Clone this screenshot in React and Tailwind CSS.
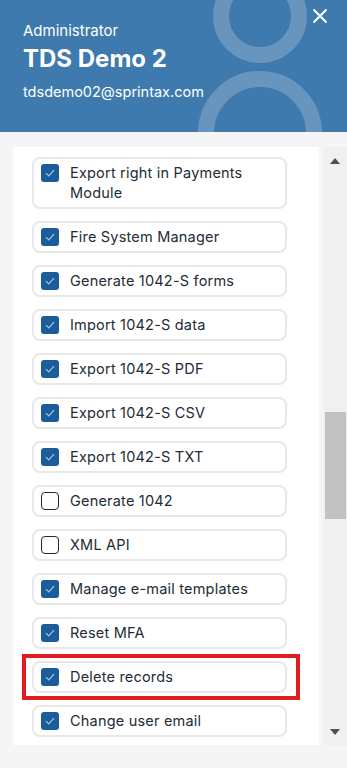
import React from "react";

const perms = [
  { label: "Export right in Payments Module", on: true },
  { label: "Fire System Manager", on: true },
  { label: "Generate 1042-S forms", on: true },
  { label: "Import 1042-S data", on: true },
  { label: "Export 1042-S PDF", on: true },
  { label: "Export 1042-S CSV", on: true },
  { label: "Export 1042-S TXT", on: true },
  { label: "Generate 1042", on: false },
  { label: "XML API", on: false },
  { label: "Manage e-mail templates", on: true },
  { label: "Reset MFA", on: true },
  { label: "Delete records", on: true, marked: true },
  { label: "Change user email", on: true },
];

function Box({ on }) {
  if (!on) {
    return (
      <span className="mt-[1px] h-[18px] w-[18px] shrink-0 rounded-[4px] border-[1.5px] border-[#1e2a36] bg-white" />
    );
  }
  return (
    <span className="mt-[1px] flex h-[18px] w-[18px] shrink-0 items-center justify-center rounded-[3px] bg-[#1b5c9b]">
      <svg width="12" height="10" viewBox="0 0 12 10" fill="none">
        <path d="M2 5.2 L4.8 8 L10 2.2" stroke="#a9c6e4" strokeWidth="1.2" />
      </svg>
    </span>
  );
}

function Row({ label, on }) {
  return (
    <div className="flex w-[255px] shrink-0 items-start gap-[11px] rounded-[8px] border-2 border-[#e8e8e8] bg-white py-[4px] pl-[7px] pr-3">
      <Box on={on} />
      <span className="text-[14.5px] leading-[20px] tracking-[0.2px] text-[#222c36]">{label}</span>
    </div>
  );
}

export default function App() {
  return (
    <div className="h-[768px] w-[347px] overflow-hidden bg-[#f5f5f5] font-['Inter',sans-serif]">
      <div className="relative h-[132px] overflow-hidden bg-[#3e7aae] pl-[23px] pt-[21px] text-white">
        <div className="absolute left-[213px] top-[-31px] h-[94px] w-[94px] rounded-full border-[16px] border-[#6895bd]" />
        <div className="absolute left-[198px] top-[71px] h-[124px] w-[124px] rounded-full border-[16px] border-[#6895bd]" />
        <svg className="absolute left-[312px] top-[8px]" width="16" height="16" viewBox="0 0 16 16">
          <path d="M1.5 1.5 L14.5 14.5 M14.5 1.5 L1.5 14.5" stroke="white" strokeWidth="2" />
        </svg>
        <div className="relative text-[15px] leading-[20px]">Administrator</div>
        <div className="relative mt-[3px] text-[24px] font-bold leading-[30px]">TDS Demo 2</div>
        <div className="relative mt-[8px] text-[14.5px] leading-[20px]">tdsdemo02@sprintax.com</div>
      </div>
      <div className="mt-[15px] flex h-[598px]">
        <div className="ml-[13px] flex w-[306px] flex-col gap-[12px] overflow-hidden bg-white pl-[19px] pt-[10px]">
          {perms.map((p) =>
            p.marked ? (
              <div
                key={p.label}
                className="-my-[7px] -ml-[10px] w-[278px] shrink-0 border-[4px] border-[#e31b23] py-[3px] pl-[6px]"
              >
                <Row label={p.label} on={p.on} />
              </div>
            ) : (
              <Row key={p.label} label={p.label} on={p.on} />
            )
          )}
        </div>
        <div className="ml-[4px] flex w-[24px] flex-col items-center bg-[#f0f0f0]">
          <svg className="mt-[11px]" width="10" height="6" viewBox="0 0 10 6">
            <path d="M0 6 L5 0 L10 6 Z" fill="#505050" />
          </svg>
          <div className="mt-[248px] h-[107px] w-[21px] bg-[#c1c1c1]" />
          <div className="flex-1" />
          <svg className="mb-[10px]" width="10" height="6" viewBox="0 0 10 6">
            <path d="M0 0 L10 0 L5 6 Z" fill="#505050" />
          </svg>
        </div>
      </div>
    </div>
  );
}
